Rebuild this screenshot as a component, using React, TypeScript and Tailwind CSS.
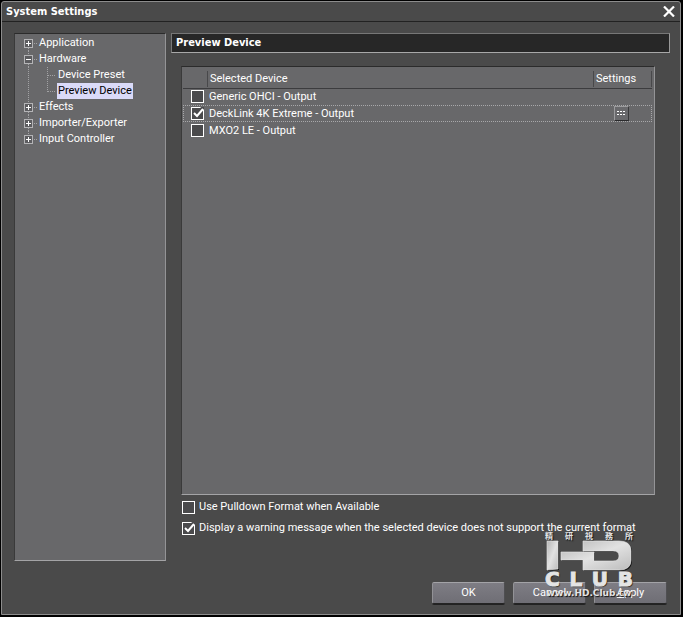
import React, { useState } from "react";

interface TreeNode {
  label: string;
  children?: string[];
  open?: boolean;
}

const tree: TreeNode[] = [
  { label: "Application" },
  { label: "Hardware", open: true, children: ["Device Preset", "Preview Device"] },
  { label: "Effects" },
  { label: "Importer/Exporter" },
  { label: "Input Controller" },
];

const devices = [
  { name: "Generic OHCI - Output", enabled: false },
  { name: "DeckLink 4K Extreme - Output", enabled: true },
  { name: "MXO2 LE - Output", enabled: false },
];

function Expander({ open, first, last }: { open?: boolean; first: boolean; last: boolean }) {
  return (
    <svg width="15" height="16" viewBox="0 0 15 16" shapeRendering="crispEdges" className="shrink-0" aria-hidden="true">
      <g stroke="#a2a2a4" strokeDasharray="1 1">
        {!first && <path d="M4.5 0v4" />}
        {!last && <path d="M4.5 13v3" />}
        <path d="M10 8.5h3" />
      </g>
      <rect x="0.5" y="4.5" width="8" height="8" fill="#5c5c5f" stroke="#b4b4b6" />
      <path d="M2 8.5h5" stroke="#fff" />
      {!open && <path d="M4.5 6v5" stroke="#fff" />}
    </svg>
  );
}

function Branch({ last }: { last: boolean }) {
  return (
    <svg width="33" height="16" viewBox="0 0 33 16" shapeRendering="crispEdges" className="shrink-0" aria-hidden="true">
      <g stroke="#a2a2a4" strokeDasharray="1 1">
        <path d="M4.5 0v16" />
        <path d={last ? "M23.5 0v9" : "M23.5 0v16"} />
        <path d="M24 8.5h8" />
      </g>
    </svg>
  );
}

function CheckBox({ checked, ...rest }: React.InputHTMLAttributes<HTMLInputElement>) {
  return (
    <span className="relative block size-[13px] shrink-0">
      <input
        type="checkbox"
        checked={checked}
        className="block size-[13px] appearance-none border border-white bg-[#4a4a4c]"
        {...rest}
      />
      {checked && (
        <svg width="13" height="13" viewBox="0 0 13 13" className="pointer-events-none absolute inset-0" aria-hidden="true">
          <path d="M9 0h4v3z" fill="#4a4a4c" />
          <path d="M3 6l3 3 6-7" fill="none" stroke="#fff" strokeWidth="2" />
        </svg>
      )}
    </span>
  );
}

function DialogButton({ children }: { children: React.ReactNode }) {
  return (
    <button
      type="button"
      className="h-[22px] w-[73px] rounded-[2px] border border-t-[#a3a3a7] border-r-[#4f4f52] border-b-[#242424] border-l-[#929296] bg-linear-to-b from-[#7e7d84] to-[#6f6e75] leading-4 shadow-[0_1px_0_#222]"
    >
      {children}
    </button>
  );
}

function Watermark() {
  return (
    <div className="pointer-events-none absolute right-[50px] bottom-[18px] flex w-[88px] flex-col font-['DejaVu_Sans',sans-serif] font-bold text-[#e4e4e4] [text-shadow:1px_1px_1px_#111]">
      <div className="flex justify-between font-['Noto_Sans_CJK_TC',sans-serif] text-[8px] leading-[8px]">
        {["精", "研", "視", "務", "所"].map((c) => (
          <span key={c}>{c}</span>
        ))}
      </div>
      <svg width="88" height="32" viewBox="0 0 88 32" role="img" aria-label="HD">
        <defs>
          <linearGradient id="steel" x1="0" y1="0" x2="1" y2="1">
            <stop offset="0" stopColor="#b4b4b4" />
            <stop offset="0.5" stopColor="#e2e2e2" />
            <stop offset="1" stopColor="#bcbcbc" />
          </linearGradient>
        </defs>
        <g transform="translate(1 1)" fill="#151515">
          <path d="M2 1h11v28l-11 1z" />
          <path d="M16 12h33v9h19q6 0 6-5t-6-5H38V1h36q12 0 12 10v9q0 10-12 10H38V20H16z" />
        </g>
        <g fill="url(#steel)" stroke="#e8e8e8" strokeWidth="0.6">
          <path d="M2 1h11v28l-11 1z" />
          <path d="M16 12h33v9h19q6 0 6-5t-6-5H38V1h36q12 0 12 10v9q0 10-12 10H38V20H16z" />
        </g>
      </svg>
      <div className="flex justify-between text-[20px] leading-[15px] [-webkit-text-stroke:1px_#e4e4e4]">
        {["C", "L", "U", "B"].map((c) => (
          <span key={c}>{c}</span>
        ))}
      </div>
      <div className="text-center text-[9px] leading-[12px]">www.HD.Club.tw</div>
    </div>
  );
}

export default function App() {
  const [selected, setSelected] = useState("Preview Device");
  const [enabled, setEnabled] = useState(devices.map((d) => d.enabled));
  const [pulldown, setPulldown] = useState(false);
  const [warn, setWarn] = useState(true);

  return (
    <div className="relative flex min-h-screen flex-col bg-black p-px pr-[2px] pb-[2px] font-[Roboto,sans-serif] text-[11px] leading-4 text-white">
      <div className="flex flex-1 flex-col rounded-t-[3px] border border-[#8c8c8c] bg-[#4a4a4a]">
        <header className="flex h-5 items-center justify-between border-b border-[#222] pr-[5px] pl-1">
          <h1 className="font-['DejaVu_Sans_Condensed','Noto_Sans',sans-serif] font-bold">System Settings</h1>
          <button type="button" aria-label="Close">
            <svg width="12" height="11" viewBox="0 0 12 11" aria-hidden="true">
              <path d="M1 0.5l10 10M11 0.5l-10 10" stroke="#fff" strokeWidth="2.2" />
            </svg>
          </button>
        </header>

        <main className="flex flex-1 gap-[5px] pt-[11px] pr-[10px] pl-3">
          <nav className="w-[152px] shrink-0 border border-t-[#2b2b2b] border-r-[#949496] border-b-[#a4a4a6] border-l-[#3a3a3a] bg-[#68686a] pt-px pl-[9px]">
            <ul>
              {tree.map((node, i) => (
                <li key={node.label}>
                  <button type="button" className="flex h-4 items-center">
                    <Expander open={node.open} first={i === 0} last={i === tree.length - 1} />
                    <span>{node.label}</span>
                  </button>
                  {node.open && (
                    <ul>
                      {node.children?.map((child, j) => (
                        <li key={child}>
                          <button type="button" onClick={() => setSelected(child)} className="flex h-4 items-center">
                            <Branch last={j === node.children!.length - 1} />
                            <span className={child === selected ? "bg-[#dadaf8] px-px text-black" : "px-px"}>{child}</span>
                          </button>
                        </li>
                      ))}
                    </ul>
                  )}
                </li>
              ))}
            </ul>
          </nav>

          <section className="flex min-w-0 flex-1 flex-col">
            <h2 className="flex h-5 items-center border border-t-[#777] border-r-[#999] border-b-[#a8a8a8] border-l-[#777] bg-[#272727] pl-1 font-['DejaVu_Sans_Condensed','Noto_Sans',sans-serif] font-bold">
              Preview Device
            </h2>

            <div className="mt-[13px] mr-[15px] ml-[10px] flex-1 border border-t-[#2b2b2b] border-r-[#949496] border-b-[#a4a4a6] border-l-[#3a3a3a] bg-[#68686a] pr-[2px] pl-px">
              <table className="w-full table-fixed border-collapse text-left">
                <thead>
                  <tr className="h-[21px] border-b border-[#3c3c3e]">
                    <th className="w-6 p-0" aria-label="Enabled" />
                    <th className="p-0 pt-[3px] font-normal">
                      <span className="block border-l border-[#48484a] pl-[2px]">Selected Device</span>
                    </th>
                    <th className="w-[59px] p-0 pt-[3px] font-normal">
                      <span className="block border-x border-[#48484a] pl-[2px]">Settings</span>
                    </th>
                  </tr>
                </thead>
                <tbody>
                  {devices.map((d, i) => (
                    <tr
                      key={d.name}
                      className={i === 1 ? "h-[17px] outline-1 -outline-offset-1 outline-dotted outline-[#a8a8aa]" : "h-[17px]"}
                    >
                      <td className="p-0 pl-2">
                        <CheckBox
                          id={`device-${i}`}
                          checked={enabled[i]}
                          onChange={() => setEnabled(enabled.map((v, k) => (k === i ? !v : v)))}
                        />
                      </td>
                      <td className="p-0 pl-[2px]">
                        <label htmlFor={`device-${i}`} className="block">{d.name}</label>
                      </td>
                      <td className="p-0 pr-[2px]">
                        {i === 1 && (
                          <button
                            type="button"
                            aria-label="Device settings"
                            className="mx-auto block size-[15px] border border-t-[#9c9c9e] border-r-[#3a3a3c] border-b-[#2a2a2c] border-l-[#9c9c9e] bg-[#69696c]"
                          >
                            <svg width="13" height="13" viewBox="0 0 13 13" shapeRendering="crispEdges" aria-hidden="true">
                              <path d="M2 4.5h9M2 7.5h9" stroke="#fff" strokeDasharray="2 1" />
                            </svg>
                          </button>
                        )}
                      </td>
                    </tr>
                  ))}
                </tbody>
              </table>
            </div>

            <div className="flex flex-col gap-[5px] pt-1 pb-[25px] pl-[11px]">
              <label className="flex items-center gap-1">
                <CheckBox checked={pulldown} onChange={() => setPulldown(!pulldown)} />
                Use Pulldown Format when Available
              </label>
              <label className="flex items-center gap-1">
                <CheckBox checked={warn} onChange={() => setWarn(!warn)} />
                Display a warning message when the selected device does not support the current format
              </label>
            </div>
          </section>
        </main>

        <footer className="flex justify-end gap-2 pt-[21px] pr-[13px] pb-[10px]">
          <DialogButton>OK</DialogButton>
          <DialogButton>Cancel</DialogButton>
          <DialogButton>
            <u>A</u>pply
          </DialogButton>
        </footer>
      </div>
      <Watermark />
    </div>
  );
}
